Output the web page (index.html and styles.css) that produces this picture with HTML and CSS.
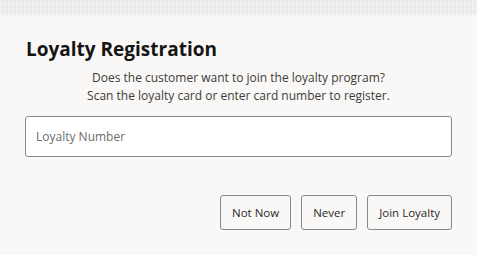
FILE: index.html
```html
<!DOCTYPE html>
<html>
<head>
<meta charset="utf-8">
<link rel="stylesheet" href="styles.css">
</head>
<body>
<div class="strip"></div>
<div class="dialog">
  <h1 class="title">Loyalty Registration</h1>
  <p class="msg">Does the customer want to join the loyalty program?<br>Scan the loyalty card or enter card number to register.</p>
  <div class="field"><span class="placeholder">Loyalty Number</span></div>
  <div class="actions">
    <button class="btn">Not Now</button>
    <button class="btn">Never</button>
    <button class="btn">Join Loyalty</button>
  </div>
</div>
</body>
</html>
```
FILE: styles.css
```css
html, body {
  margin: 0;
  padding: 0;
  background: #f9f8f6;
  font-family: "Open Sans", "Noto Sans", sans-serif;
}
.strip {
  height: 15px;
  background-color: #ecebe9;
  background-image:
    repeating-linear-gradient(90deg, rgba(255,255,255,0.3) 0 1px, transparent 1px 3px, rgba(0,0,0,0.015) 3px 4px),
    repeating-linear-gradient(0deg, rgba(255,255,255,0.2) 0 2px, transparent 2px 5px);
}
.dialog {
  padding: 21px 25px 0 25px;
  display: flex;
  flex-direction: column;
}
.title {
  margin: 0 0 0 1px;
  font-size: 19px;
  font-weight: 700;
  color: #161513;
  line-height: 26px;
}
.msg {
  margin: 7px 0 0 0;
  text-align: center;
  font-size: 12px;
  line-height: 18px;
  color: #3c3b39;
}
.field {
  margin-top: 11px;
  height: 39px;
  border: 1px solid #8a8987;
  border-radius: 3px;
  background: #ffffff;
  display: flex;
  align-items: center;
  padding-left: 10px;
}
.placeholder {
  font-size: 12px;
  color: #6d6c6a;
}
.actions {
  margin-top: 38px;
  display: flex;
  justify-content: flex-end;
  gap: 10px;
}
.btn {
  height: 35px;
  padding: 0 11px;
  border: 1px solid #8a8987;
  border-radius: 3px;
  background: #f9f8f6;
  font-family: inherit;
  font-size: 11.5px;
  color: #2a2927;
}
```
